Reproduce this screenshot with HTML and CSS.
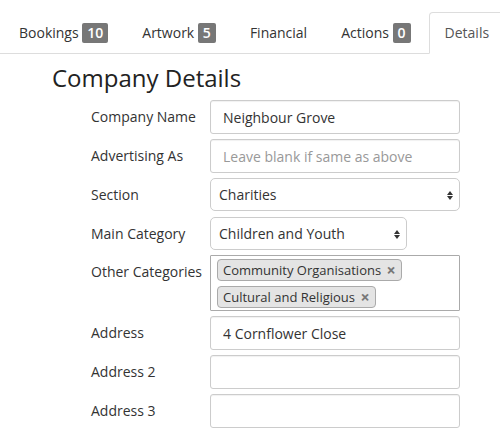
FILE: index.html
```html
<!DOCTYPE html>
<html>
<head>
<meta charset="utf-8">
<link rel="stylesheet" href="styles.css">
</head>
<body>
<ul class="tabs">
  <li class="tab"><a>Bookings <span class="badge">10</span></a></li>
  <li class="tab"><a>Artwork <span class="badge">5</span></a></li>
  <li class="tab"><a>Financial</a></li>
  <li class="tab"><a>Actions <span class="badge">0</span></a></li>
  <li class="tab active"><a>Details</a></li>
</ul>
<h2 class="title">Company Details</h2>
<form class="form">
  <label class="lbl">Company Name</label>
  <input class="ctl" type="text" value="Neighbour Grove">
  <label class="lbl">Advertising As</label>
  <input class="ctl" type="text" placeholder="Leave blank if same as above">
  <label class="lbl">Section</label>
  <div class="sel-wrap"><select class="sel"><option>Charities</option></select></div>
  <label class="lbl">Main Category</label>
  <div class="sel-wrap short"><select class="sel"><option>Children and Youth</option></select></div>
  <label class="lbl">Other Categories</label>
  <div class="multi">
    <span class="tag">Community Organisations <span class="x">×</span></span>
    <span class="tag">Cultural and Religious <span class="x">×</span></span>
  </div>
  <label class="lbl">Address</label>
  <input class="ctl" type="text" value="4 Cornflower Close">
  <label class="lbl">Address 2</label>
  <input class="ctl" type="text">
  <label class="lbl">Address 3</label>
  <input class="ctl" type="text">
</form>
</body>
</html>
```
FILE: styles.css
```css
* { box-sizing: border-box; }
body {
  margin: 0;
  font-family: "Open Sans", "Noto Sans", sans-serif;
  font-size: 14px;
  color: #333;
  background: #fff;
  overflow: hidden;
}
.tabs {
  list-style: none;
  margin: 12px 0 0 0;
  padding: 0 0 0 3px;
  display: flex;
  border-bottom: 1px solid #ddd;
  white-space: nowrap;
}
.tab { margin-right: 2px; margin-bottom: -1px; flex: none; }
.tab a {
  display: block;
  padding: 10px 15px;
  line-height: 20px;
  border: 1px solid transparent;
  border-radius: 4px 4px 0 0;
  color: #333;
}
.tab.active a {
  border-color: #ddd;
  border-bottom-color: #fff;
  background: #fff;
  color: #555;
}
.badge {
  display: inline-block;
  background: #777;
  color: #fff;
  font-weight: 600;
  font-size: 14px;
  line-height: 20px;
  padding: 0 5px;
  border-radius: 2px;
}
.title {
  margin: 11px 0 9px 52px;
  font-size: 24px;
  font-weight: 400;
  line-height: 1.1;
  color: #222;
}
.form {
  display: grid;
  grid-template-columns: 119px 250px;
  row-gap: 5px;
  margin-left: 91px;
}
.lbl {
  padding-top: 7px;
  line-height: 20px;
  color: #333;
}
.ctl {
  height: 34px;
  width: 250px;
  border: 1px solid #ccc;
  border-radius: 3px;
  padding: 6px 12px;
  font-family: inherit;
  font-size: 14px;
  color: #333;
  box-shadow: inset 0 1px 1px rgba(0,0,0,.06);
}
.ctl::placeholder { color: #999; }
.sel-wrap { position: relative; width: 250px; height: 34px; }
.sel-wrap.short { width: 197px; height: 33px; }
.sel {
  appearance: none;
  -webkit-appearance: none;
  width: 100%;
  height: 33px;
  border: 1px solid #ccc;
  border-radius: 5px;
  background: #fff;
  padding: 0 8px;
  font-family: inherit;
  font-size: 14px;
  color: #333;
  display: block;
}
.sel-wrap::before, .sel-wrap::after {
  content: "";
  position: absolute;
  right: 7px;
  width: 0; height: 0;
  border-left: 3px solid transparent;
  border-right: 3px solid transparent;
  pointer-events: none;
}
.sel-wrap::before { top: 13px; border-bottom: 4px solid #333; }
.sel-wrap::after { top: 18px; border-top: 4px solid #333; }
.multi {
  width: 250px;
  height: 56px;
  border: 1px solid #aaa;
  border-radius: 1px;
  padding: 3px 6px;
  display: flex;
  flex-direction: column;
  align-items: flex-start;
  gap: 5px;
}
.tag {
  display: inline-flex;
  align-items: center;
  white-space: pre;
  height: 22px;
  background: #e4e4e4;
  border: 1px solid #aaa;
  border-radius: 4px;
  padding: 0 5px;
  font-size: 13px;
  line-height: 20px;
  color: #333;
}
.x { color: #777; font-weight: 700; font-size: 16px; line-height: 20px; margin-left: 2px; }
```
